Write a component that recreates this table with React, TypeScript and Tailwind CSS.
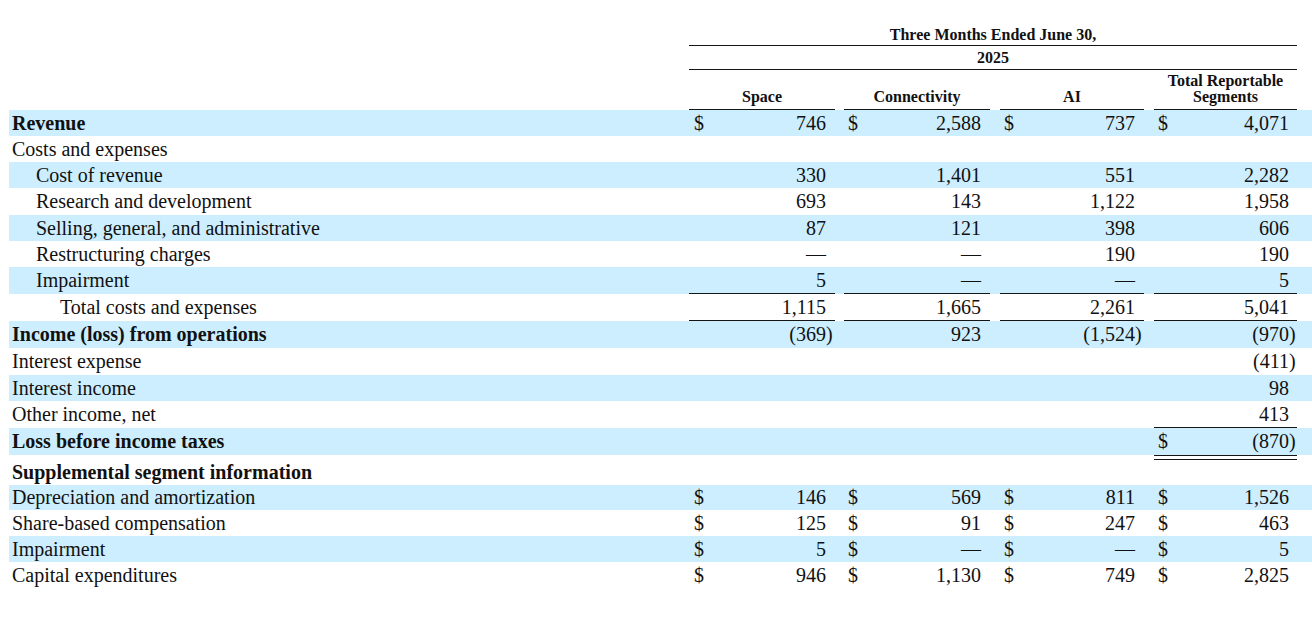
import React from 'react';

type Cell = { d?: boolean; v?: string } | null;

type RowProps = {
  label: string;
  level?: 0 | 1 | 2;
  bold?: boolean;
  blue?: boolean;
  h?: 25 | 26 | 27;
  cells?: Cell[];
  lines?: number[];
};

const groupW = ['w-[146px]', 'w-[146px]', 'w-[144px]', 'w-[143px]'];
const gapW = ['w-[9px]', 'w-[10px]', 'w-[10px]'];
const groupPad = ['pl-[5px] pr-[9px]', 'pl-[4px] pr-[9px]', 'pl-[4px] pr-[9px]', 'pl-[4px] pr-[8px]'];
const indent = ['pl-[3px]', 'pl-[27px]', 'pl-[51px]'];
const rowH = {
  25: 'h-[25px] leading-[25px]',
  26: 'h-[26px] leading-[26px]',
  27: 'h-[27px] leading-[27px]',
};

function Value({ v }: { v?: string }) {
  if (!v) return null;
  // negatives hang the closing paren past the number column
  if (v.startsWith('(')) {
    return (
      <span>
        {v.slice(0, -1)}
        <span className="inline-block w-0">)</span>
      </span>
    );
  }
  return <span>{v}</span>;
}

function Groups({ cells = [null, null, null, null], lines = [] }: { cells?: Cell[]; lines?: number[] }) {
  return (
    <>
      {cells.map((c, i) => (
        <React.Fragment key={i}>
          <div
            className={`${groupW[i]} ${groupPad[i]} flex justify-between ${
              lines.includes(i) ? 'border-b-[1.5px] border-[#151515]' : ''
            }`}
          >
            <span>{c?.d ? '$' : ''}</span>
            <Value v={c?.v} />
          </div>
          {i < 3 && <div className={gapW[i]} />}
        </React.Fragment>
      ))}
    </>
  );
}

function Row({ label, level = 0, bold, blue, h = 26, cells, lines }: RowProps) {
  return (
    <div className={`flex ${rowH[h]} ${blue ? 'bg-[#cceeff]' : ''}`}>
      <div className={`w-[680px] ${indent[level]} ${bold ? 'font-bold' : ''} whitespace-nowrap`}>{label}</div>
      <Groups cells={cells} lines={lines} />
    </div>
  );
}

const all = (vals: string[], dollar = false): Cell[] => vals.map((v) => ({ v, d: dollar }));
const totalOnly = (v: string, d = false): Cell[] => [null, null, null, { v, d }];

export default function App() {
  return (
    <div className="w-[1312px] h-[627px] bg-white pl-[9px] text-[20px] text-[#111] font-['Liberation_Serif','Times_New_Roman',serif]">
      {/* column headings */}
      <div className="flex text-[16px] font-bold leading-[18px]">
        <div className="w-[680px]" />
        <div className="w-[608px]">
          <div className="pt-[26px] pb-[1px] text-center border-b-[1.5px] border-[#151515]">Three Months Ended June 30,</div>
          <div className="pt-[3px] pb-[2px] text-center border-b-[1.5px] border-[#151515]">2025</div>
        </div>
      </div>
      <div className="flex text-[16px] font-bold leading-[16px] h-[40px]">
        <div className="w-[680px]" />
        {['Space', 'Connectivity', 'AI', 'Total Reportable Segments'].map((h, i) => (
          <React.Fragment key={h}>
            <div className={`${groupW[i]} flex items-end justify-center text-center pb-[4px] border-b-[1.5px] border-[#151515]`}>
              {i === 3 ? (
                <span>
                  Total Reportable
                  <br />
                  Segments
                </span>
              ) : (
                <span>{h}</span>
              )}
            </div>
            {i < 3 && <div className={gapW[i]} />}
          </React.Fragment>
        ))}
      </div>

      <Row label="Revenue" bold blue cells={all(['746', '2,588', '737', '4,071'], true)} />
      <Row label="Costs and expenses" />
      <Row label="Cost of revenue" level={1} blue cells={all(['330', '1,401', '551', '2,282'])} />
      <Row label="Research and development" level={1} h={27} cells={all(['693', '143', '1,122', '1,958'])} />
      <Row label="Selling, general, and administrative" level={1} blue cells={all(['87', '121', '398', '606'])} />
      <Row label="Restructuring charges" level={1} cells={all(['—', '—', '190', '190'])} />
      <Row label="Impairment" level={1} blue h={27} cells={all(['5', '—', '—', '5'])} lines={[0, 1, 2, 3]} />
      <Row label="Total costs and expenses" level={2} h={27} cells={all(['1,115', '1,665', '2,261', '5,041'])} lines={[0, 1, 2, 3]} />
      <Row label="Income (loss) from operations" bold blue h={27} cells={all(['(369)', '923', '(1,524)', '(970)'])} />
      <Row label="Interest expense" h={27} cells={totalOnly('(411)')} />
      <Row label="Interest income" blue cells={totalOnly('98')} />
      <Row label="Other income, net" h={27} cells={totalOnly('413')} lines={[3]} />
      <Row label="Loss before income taxes" bold blue h={27} cells={totalOnly('(870)', true)} />
      <div className="flex h-[5px]">
        <div className="w-[1145px]" />
        <div className="w-[143px] border-y-[1.5px] border-[#151515]" />
      </div>
      <Row label="Supplemental segment information" bold h={25} />
      <Row label="Depreciation and amortization" blue h={25} cells={all(['146', '569', '811', '1,526'], true)} />
      <Row label="Share-based compensation" cells={all(['125', '91', '247', '463'], true)} />
      <Row label="Impairment" blue cells={all(['5', '—', '—', '5'], true)} />
      <Row label="Capital expenditures" cells={all(['946', '1,130', '749', '2,825'], true)} />
    </div>
  );
}
